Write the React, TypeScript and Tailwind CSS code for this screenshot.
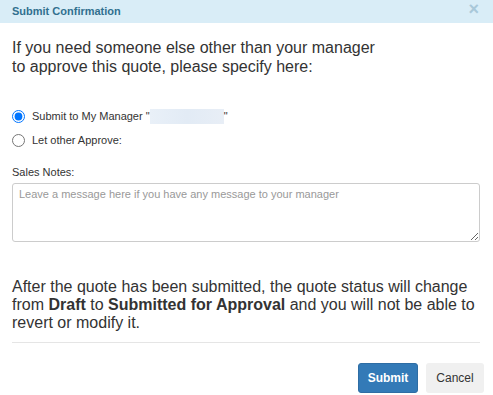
import React from 'react';

export default function App() {
  return (
    <div className="w-[493px] h-[395px] overflow-hidden bg-white text-[#333] font-['Liberation_Sans',Arial,sans-serif]">
      {/* Header */}
      <div className="h-[23px] bg-[#d9edf7] flex items-center justify-between pl-3 pr-[14px]">
        <span className="text-[11px] font-bold text-[#31708f]">Submit Confirmation</span>
        <span className="text-[18px] font-bold leading-none text-[#a9c8d9] -mt-[6px]">×</span>
      </div>

      <div className="px-3">
        <p className="mt-[15px] text-[16px] leading-[19px]">
          If you need someone else other than your manager
          <br />
          to approve this quote, please specify here:
        </p>

        <div className="mt-[34px] flex flex-col gap-[11px] text-[11px]">
          <label className="flex items-center h-[13px]">
            <input type="radio" name="approver" defaultChecked className="m-0 w-[13px] h-[13px]" />
            <span className="ml-[7px] flex items-center">
              Submit to My Manager "
              <span className="inline-block w-[74px] h-[15px] bg-gradient-to-r from-[#e9f0f8] via-[#e2ebf5] to-[#e8eef6]" />
              "
            </span>
          </label>
          <label className="flex items-center h-[13px]">
            <input type="radio" name="approver" className="m-0 w-[13px] h-[13px]" />
            <span className="ml-[7px]">Let other Approve:</span>
          </label>
        </div>

        <div className="mt-[19px] text-[11px] leading-[13px]">Sales Notes:</div>
        <textarea
          className="mt-[4px] block w-[468px] h-[59px] border border-[#ccc] rounded-[3px] px-[6px] py-[3px] text-[11px] leading-[15px] outline-none placeholder:text-[#999] font-['Liberation_Sans',Arial,sans-serif]"
          placeholder="Leave a message here if you have any message to your manager"
        />

        <p className="mt-[36px] text-[16px] leading-[18px]">
          After the quote has been submitted, the quote status will change from <b>Draft</b> to{' '}
          <b>Submitted for Approval</b> and you will not be able to revert or modify it.
        </p>

        <div className="mt-[10px] h-px w-[468px] bg-[#e5e5e5]" />

        <div className="mt-[20px] -mr-[3px] flex justify-end gap-[8px]">
          <button className="h-[30px] w-[60px] rounded-[3px] border border-[#2e6da4] bg-[#337ab7] text-white text-[12px] font-bold">
            Submit
          </button>
          <button className="h-[30px] w-[58px] rounded-[3px] bg-[#f0f0f0] text-[#333] text-[12px]">
            Cancel
          </button>
        </div>
      </div>
    </div>
  );
}
